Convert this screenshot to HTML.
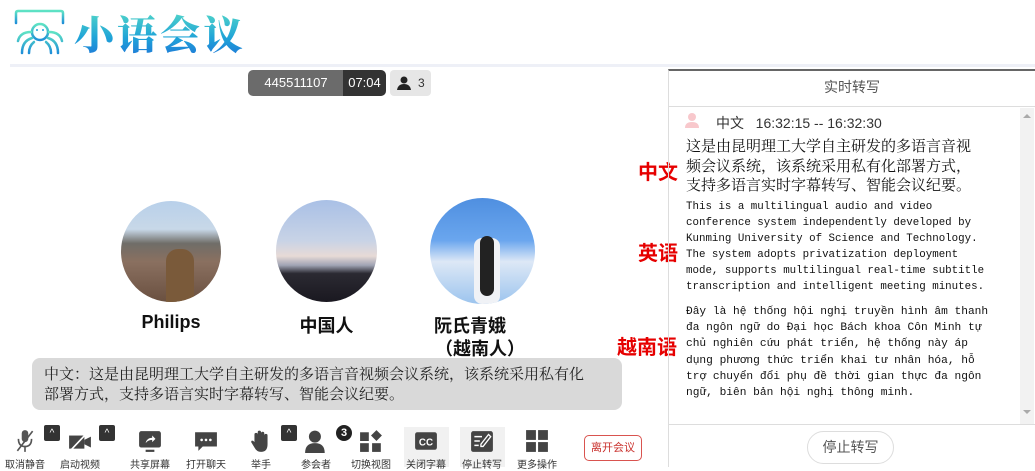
<!DOCTYPE html>
<html><head><meta charset="utf-8"><style>
*{margin:0;padding:0;box-sizing:border-box}
body{width:1035px;height:467px;overflow:hidden;background:#fff;position:relative;font-family:"Liberation Sans","Noto Sans CJK SC",sans-serif}
.a{position:absolute}
.serif{font-family:"Liberation Serif","Noto Serif CJK SC",serif}
.mono{font-family:"Liberation Mono","Noto Sans CJK SC",monospace;white-space:nowrap}
.logo{font-family:"Noto Serif CJK SC",serif;font-weight:900;font-size:40px;letter-spacing:3px;background:linear-gradient(180deg,#5fe3c4,#1fa3d8 60%,#1f6fd8);-webkit-background-clip:text;color:transparent}
.red{color:#e60000;font-weight:bold;font-size:20px;font-family:"Liberation Sans","Noto Sans CJK SC",sans-serif}
.name{font-weight:bold;font-size:18px;color:#111;text-align:center;white-space:nowrap}
.tb{position:absolute;top:429px;text-align:center;font-size:10px;color:#333;width:50px}
.tb svg{display:block;margin:0 auto 3px}
.car{position:absolute;top:425px;width:16px;height:16px;background:#333;border-radius:2px;color:#fff;font-size:10px;text-align:center;line-height:18px}
</style></head><body>
<svg class="a" style="left:12px;top:8px" width="55" height="48" viewBox="0 0 55 48" fill="none" stroke-width="2.5" stroke-linecap="round">
<defs><linearGradient id="g" x1="0" y1="0" x2="0" y2="1"><stop offset="0" stop-color="#5fe3c4"/><stop offset="1" stop-color="#1f8fd8"/></linearGradient></defs>
<path d="M4 15 V5 Q4 3 6 3 H49 Q51 3 51 5 V15" stroke="url(#g)"/>
<circle cx="28" cy="24" r="8" stroke="url(#g)"/><circle cx="25" cy="22" r="1" fill="#1fa3d8" stroke="none"/><circle cx="31" cy="22" r="1" fill="#1fa3d8" stroke="none"/>
<path d="M20 30 Q10 33 10 45 M36 30 Q46 33 46 45 M22 34 Q17 38 17 45 M34 34 Q39 38 39 45 M19 24 Q8 24 6 33 M37 24 Q48 24 50 33" stroke="url(#g)"/>
</svg>
<div class="a logo" style="left:74px;top:4px">小语会议</div>
<div class="a" style="left:10px;top:64px;width:660px;height:3px;background:#eef0f7"></div>
<div class="a" style="left:668px;top:64px;width:367px;height:3px;background:#eef0f7"></div>
<div class="a" style="left:248px;top:70px;width:96px;height:26px;background:#6b6b6b;border-radius:5px 0 0 5px;color:#fff;font-size:13px;line-height:26px;text-align:center">445511107</div>
<div class="a" style="left:343px;top:70px;width:43px;height:26px;background:#333;border-radius:0 5px 5px 0;color:#fff;font-size:13px;line-height:26px;text-align:center">07:04</div>
<div class="a" style="left:390px;top:70px;width:41px;height:26px;background:#e6e6e6;border-radius:4px;font-size:12px;line-height:26px;color:#333"><svg style="position:absolute;left:7px;top:6px" width="15" height="14" viewBox="0 0 15 14"><circle cx="7" cy="4" r="3.5" fill="#222"/><path d="M0 14 Q1 8 7 8 Q13 8 14 14Z" fill="#222"/></svg><span style="position:absolute;left:28px">3</span></div>
<div class="a" style="left:121px;top:201px;width:100px;height:101px;border-radius:50%;overflow:hidden;background:linear-gradient(180deg,#b8d0ea 0%,#c8d8e8 28%,#6f6d68 42%,#8a7060 60%,#6a5040 100%)"><div class="a" style="left:45px;top:48px;width:28px;height:55px;background:#7a5a3a;border-radius:12px 12px 0 0"></div></div>
<div class="a" style="left:276px;top:200px;width:101px;height:102px;border-radius:50%;background:linear-gradient(180deg,#a9c0e6 0%,#c8d3e6 40%,#e7dad6 55%,#a0a4b4 64%,#2b2a32 72%,#1a1820 100%)"></div>
<div class="a" style="left:430px;top:198px;width:105px;height:106px;border-radius:50%;overflow:hidden;background:linear-gradient(180deg,#4f8fe0 0%,#6aa6ee 40%,#dde8f6 60%,#9cc4ee 100%)"><div class="a" style="left:44px;top:40px;width:26px;height:66px;background:#f0f2f6;border-radius:8px"></div><div class="a" style="left:50px;top:38px;width:14px;height:60px;background:#222;border-radius:7px"></div></div>
<div class="a name" style="left:121px;top:312px;width:100px">Philips</div>
<div class="a name" style="left:276px;top:312px;width:101px">中国人</div>
<div class="a name" style="left:430px;top:312px;width:80px">阮氏青娥</div>
<div class="a name" style="left:430px;top:335px;width:100px">（越南人）</div>
<div class="a serif" style="left:32px;top:358px;width:590px;height:52px;background:#d9d9d9;border-radius:8px;padding:7px 30px 7px 12px;font-size:15px;line-height:20px;color:#222">中文：这是由昆明理工大学自主研发的多语言音视频会议系统，该系统采用私有化部署方式，支持多语言实时字幕转写、智能会议纪要。</div>
<div class="a red" style="left:638px;top:156px">中文</div>
<div class="a red" style="left:638px;top:237px">英语</div>
<div class="a red" style="left:617px;top:331px">越南语</div>
<div class="a" style="left:668px;top:69px;width:367px;height:398px;border-left:1px solid #ddd;border-top:2px solid #666"></div>
<div class="a" style="left:669px;top:71px;width:366px;height:36px;border-bottom:1px solid #ddd;text-align:center;line-height:32px;font-size:14px;color:#555">实时转写</div>
<div class="a" style="left:1020px;top:108px;width:14px;height:317px;background:#f2f2f2"></div>
<div class="a" style="left:1023px;top:114px;border:4px solid transparent;border-bottom:4px solid #aaa;border-top:0"></div>
<div class="a" style="left:1023px;top:410px;border:4px solid transparent;border-top:4px solid #aaa;border-bottom:0"></div>
<svg class="a" style="left:684px;top:112px" width="16" height="16" viewBox="0 0 16 16"><circle cx="8" cy="5" r="4" fill="#f8c8cc"/><path d="M1 16 Q1 10 8 10 Q15 10 15 16Z" fill="#f8c8cc"/></svg>
<div class="a" style="left:716px;top:113px;font-size:14px;color:#333">中文&nbsp;&nbsp;&nbsp;16:32:15 -- 16:32:30</div>
<div class="a serif" style="left:686px;top:138px;font-size:15px;line-height:19.5px;color:#111;white-space:nowrap">这是由昆明理工大学自主研发的多语言音视<br>频会议系统，该系统采用私有化部署方式，<br>支持多语言实时字幕转写、智能会议纪要。</div>
<div class="a mono" style="left:686px;top:199px;font-size:10.8px;line-height:16px;color:#111">This is a multilingual audio and video<br>conference system independently developed by<br>Kunming University of Science and Technology.<br>The system adopts privatization deployment<br>mode, supports multilingual real-time subtitle<br>transcription and intelligent meeting minutes.</div>
<div class="a mono" style="left:686px;top:304px;font-size:11.2px;line-height:16.2px;color:#111">Đây là hệ thống hội nghị truyền hình âm thanh<br>đa ngôn ngữ do Đại học Bách khoa Côn Minh tự<br>chủ nghiên cứu phát triển, hệ thống này áp<br>dụng phương thức triển khai tư nhân hóa, hỗ<br>trợ chuyển đổi phụ đề thời gian thực đa ngôn<br>ngữ, biên bản hội nghị thông minh.</div>
<div class="a" style="left:669px;top:424px;width:366px;height:1px;background:#ddd"></div>
<div class="a" style="left:807px;top:431px;width:87px;height:33px;border:1px solid #ddd;border-radius:17px;text-align:center;line-height:31px;font-size:14px;color:#555">停止转写</div>
<div class="tb" style="left:0px"><svg width="22" height="24" viewBox="0 0 20 22"><rect x="7" y="1" width="6" height="11" rx="3" fill="#555"/><path d="M4 9 Q4 16 10 16 Q16 16 16 9 M10 16 V21" stroke="#555" stroke-width="1.5" fill="none"/><path d="M3 20 L17 2" stroke="#555" stroke-width="1.5"/></svg>取消静音</div>
<div class="car" style="left:44px">^</div>
<div class="tb" style="left:55px"><svg width="24" height="24" viewBox="0 0 22 22"><rect x="1" y="6" width="14" height="12" fill="#444"/><path d="M15 10 L21 7 V17 L15 14Z" fill="#444"/><path d="M2 20 L18 3" stroke="#fff" stroke-width="1.5"/></svg>启动视频</div>
<div class="car" style="left:99px">^</div>
<div class="tb" style="left:125px"><svg width="24" height="24" viewBox="0 0 22 22"><rect x="1" y="2" width="20" height="15" rx="2" fill="#444"/><path d="M7 13 Q8 8 13 8 V6 L16 9 L13 12 V10 Q9 10 7 13Z" fill="#fff"/><rect x="7" y="19" width="8" height="2" fill="#444"/></svg>共享屏幕</div>
<div class="tb" style="left:181px"><svg width="24" height="24" viewBox="0 0 22 22"><path d="M1 3 H21 V16 H8 L4 20 V16 H1Z" fill="#444"/><circle cx="7" cy="10" r="1.2" fill="#fff"/><circle cx="11" cy="10" r="1.2" fill="#fff"/><circle cx="15" cy="10" r="1.2" fill="#fff"/></svg>打开聊天</div>
<div class="tb" style="left:236px"><svg width="24" height="24" viewBox="0 0 22 22"><path d="M5 12 V5 Q5 3.5 6.5 3.5 Q8 3.5 8 5 V3 Q8 1.5 9.5 1.5 Q11 1.5 11 3 V4 Q11 2.5 12.5 2.5 Q14 2.5 14 4 V6 Q14 4.5 15.5 4.5 Q17 4.5 17 6 V14 Q17 21 11 21 Q7 21 5 17 L2 12 Q2 10 4 11Z" fill="#444"/></svg>举手</div>
<div class="car" style="left:281px">^</div>
<div class="tb" style="left:291px"><svg width="24" height="24" viewBox="0 0 22 22"><circle cx="10" cy="7" r="5.5" fill="#444"/><path d="M1 22 Q1 13 10 13 Q19 13 19 22Z" fill="#444"/></svg>参会者</div>
<div class="a" style="left:336px;top:425px;width:16px;height:16px;border-radius:50%;background:#222;color:#fff;font-size:11px;font-weight:bold;text-align:center;line-height:16px">3</div>
<div class="tb" style="left:346px"><svg width="24" height="24" viewBox="0 0 22 22"><rect x="1" y="3" width="8" height="8" fill="#444"/><path d="M16 1 L21 6 L16 11 L11 6Z" fill="#444"/><rect x="1" y="13" width="8" height="8" fill="#444"/><rect x="12" y="13" width="8" height="8" fill="#444"/></svg>切换视图</div>
<div class="a" style="left:404px;top:427px;width:45px;height:40px;background:#f1f1f1"></div>
<div class="tb" style="left:401px"><svg width="24" height="24" viewBox="0 0 22 22"><rect x="1" y="3" width="20" height="16" rx="2" fill="#444"/><text x="11" y="15" font-size="9" font-weight="bold" fill="#fff" text-anchor="middle" font-family="Liberation Sans">CC</text></svg>关闭字幕</div>
<div class="a" style="left:460px;top:427px;width:45px;height:40px;background:#f1f1f1"></div>
<div class="tb" style="left:457px"><svg width="24" height="24" viewBox="0 0 22 22"><rect x="1" y="2" width="20" height="19" rx="2" fill="#444"/><path d="M4 7 H11 M4 11 H9 M4 15 H8" stroke="#fff" stroke-width="1.3"/><path d="M17 5 L19 7 L12 16 L10 16 L10 14Z" stroke="#fff" stroke-width="1.2" fill="none"/></svg>停止转写</div>
<div class="tb" style="left:512px"><svg width="24" height="24" viewBox="0 0 22 22"><rect x="1" y="1" width="9" height="9" fill="#444"/><rect x="12" y="1" width="9" height="9" fill="#444"/><rect x="1" y="12" width="9" height="9" fill="#444"/><rect x="12" y="12" width="9" height="9" fill="#444"/></svg>更多操作</div>
<div class="a" style="left:584px;top:435px;width:58px;height:26px;border:1px solid #d9534f;border-radius:5px;color:#c9302c;font-size:11px;text-align:center;line-height:24px">离开会议</div>
</body></html>
